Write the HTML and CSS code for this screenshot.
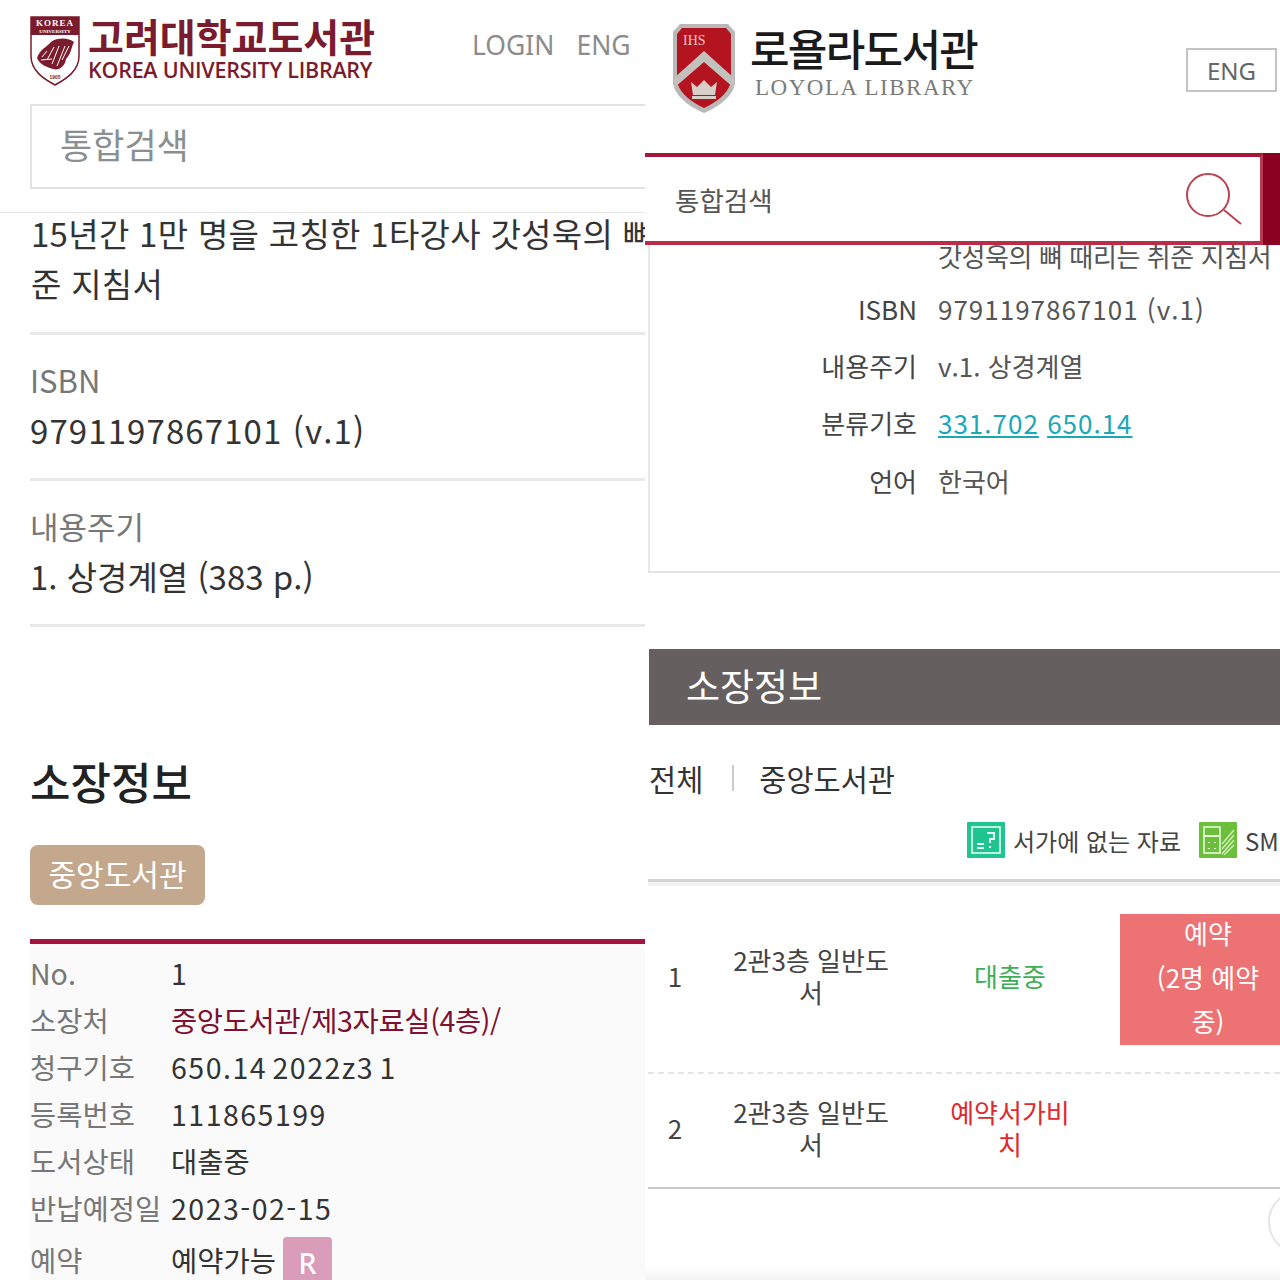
FILE: index.html
```html
<!DOCTYPE html>
<html lang="ko">
<head>
  <meta charset="UTF-8">
  <meta name="viewport" content="width=device-width, initial-scale=1.0">
  <title>소장정보</title>
  <link rel="stylesheet" href="styles.css">
</head>
<body>
  <div class="page">
    <!-- 고려대학교 -->
    <section class="korea">
      <div class="korea-head">
        <svg class="korea-shield" viewBox="0 0 50 70">
          <path d="M1 1H49V40C49 55 36 63 25 69C14 63 1 55 1 40Z" fill="#fff" stroke="#7a1c2e" stroke-width="1.5"/>
          <rect x="1" y="1" width="48" height="18" fill="#7a1c2e"/>
          <text x="25" y="10" class="shield-top">KOREA</text>
          <text x="25" y="17" class="shield-sub">UNIVERSITY</text>
          <path d="M7 42C10 33 17 31 21 26C28 21 39 22 44 26C41 32 41 38 36 43C35 50 29 55 23 53C17 51 10 49 7 42Z" fill="#7a1c2e"/>
          <path d="M12 41L17 35M17 44L24 31M22 48L29 30M27 50L35 30M32 44L39 30M11 44L22 43" stroke="#fff" stroke-width="1" fill="none"/>
          <text x="25" y="63" class="shield-year">1905</text>
        </svg>
        <div class="korea-name">
          <div class="korea-ko">고려대학교도서관</div>
          <div class="korea-en">KOREA UNIVERSITY LIBRARY</div>
        </div>
        <nav class="korea-nav"><span>LOGIN</span><span>ENG</span></nav>
      </div>
      <div class="korea-search">통합검색</div>
      <div class="korea-divider"></div>

      <div class="korea-title">15년간 1만 명을 코칭한 1타강사 갓성욱의 뼈 때리는 취<br>준 지침서</div>
      <div class="korea-field">
        <div class="field-label">ISBN</div>
        <div class="field-value num-wide">9791197867101 (v.1)</div>
      </div>
      <div class="korea-field last">
        <div class="field-label">내용주기</div>
        <div class="field-value">1. 상경계열 (383 p.)</div>
      </div>

      <h2 class="korea-holding">소장정보</h2>
      <div class="korea-tab">중앙도서관</div>

      <dl class="holding-list">
        <dt>No.</dt><dd>1</dd>
        <dt>소장처</dt><dd class="place">중앙도서관/제3자료실(4층)/</dd>
        <dt>청구기호</dt><dd class="num">650.14 2022z3 1</dd>
        <dt>등록번호</dt><dd class="num">111865199</dd>
        <dt>도서상태</dt><dd>대출중</dd>
        <dt>반납예정일</dt><dd class="num">2023-02-15</dd>
        <dt class="reserve-label">예약</dt><dd class="reserve">예약가능 <span class="badge-r">R</span></dd>
      </dl>
    </section>

    <!-- 서강대학교 로욜라 -->
    <section class="loyola">
      <div class="loyola-head">
        <svg class="loyola-shield" viewBox="0 0 64 92">
          <path d="M8 2H56L63 10V62C60 76 44 86 32 91C20 86 4 76 1 62V10Z" fill="#b9b9b9"/>
          <path d="M10 6H54L59 12V60C56 72 43 81 32 86C21 81 8 72 5 60V12Z" fill="#b3141f"/>
          <path d="M2 56L32 29L62 56V66L32 40L2 66Z" fill="#c4c0bd"/>
          <text x="11" y="23" class="ihs">IHS</text>
          <path d="M19 60L25 65L32 58L39 65L45 60L43 73H21Z" fill="#d9cfc9"/>
          <rect x="20" y="74" width="24" height="3" fill="#d9cfc9"/>
        </svg>
        <div class="loyola-name">
          <div class="loyola-ko">로욜라도서관</div>
          <div class="loyola-en">LOYOLA LIBRARY</div>
        </div>
        <div class="loyola-eng">ENG</div>
      </div>

      <div class="loyola-search">
        <div class="loyola-input">
          <span>통합검색</span>
          <svg class="search-icon" viewBox="0 0 60 54">
            <circle cx="24" cy="23" r="21" fill="none" stroke="#b8444f" stroke-width="2"/>
            <path d="M40 38L57 52" stroke="#b8444f" stroke-width="2" fill="none"/>
          </svg>
        </div>
        <div class="loyola-btn"></div>
      </div>

      <div class="detail-card">
        <div class="detail-cut">갓성욱의 뼈 때리는 취준 지침서</div>
        <div class="detail-row"><span class="detail-label">ISBN</span><span class="detail-num">9791197867101 (v.1)</span></div>
        <div class="detail-row"><span class="detail-label">내용주기</span><span>v.1. 상경계열</span></div>
        <div class="detail-row"><span class="detail-label">분류기호</span><span class="detail-num"><a class="link">331.702</a> <a class="link">650.14</a></span></div>
        <div class="detail-row"><span class="detail-label">언어</span><span>한국어</span></div>
      </div>

      <div class="section-bar">소장정보</div>

      <div class="tabs">
        <span>전체</span><i class="tab-sep"></i><span>중앙도서관</span>
      </div>

      <div class="legend">
        <span class="legend-item">
          <svg class="legend-icon" viewBox="0 0 38 36">
            <rect width="38" height="36" rx="1" fill="#1fc48f"/>
            <rect x="5" y="5" width="28" height="26" fill="none" stroke="#e6fff5" stroke-width="1.6"/>
            <path d="M20 11H27V17H23V21M23 24V26M10 22H17M10 26H17" fill="none" stroke="#e6fff5" stroke-width="2"/>
          </svg>
          서가에 없는 자료
        </span>
        <span class="legend-item">
          <svg class="legend-icon" viewBox="0 0 38 36">
            <rect width="38" height="36" rx="1" fill="#6cbf3a"/>
            <rect x="5" y="5" width="16" height="26" fill="none" stroke="#e9f8dc" stroke-width="1.6"/>
            <path d="M5 14H21M10 20V21M16 20V21M10 26V27M16 26V27" stroke="#e9f8dc" stroke-width="2" fill="none"/>
            <path d="M23 22L35 8M23 27L35 13M23 32L35 18M25 33L35 23" stroke="#cfeeb6" stroke-width="1.5" fill="none"/>
          </svg>
          SMS
        </span>
      </div>

      <div class="holding-table">
        <div class="holding-row first">
          <div class="cell-no">1</div>
          <div class="cell-place">2관3층 일반도서</div>
          <div class="cell-state loan">대출중</div>
          <div class="cell-action"><div class="reserve-btn"><div>예약<br>(2명 예약<br>중)</div></div></div>
        </div>
        <div class="holding-row second">
          <div class="cell-no">2</div>
          <div class="cell-place">2관3층 일반도서</div>
          <div class="cell-state shelf">예약서가비치</div>
          <div class="cell-action"></div>
        </div>
      </div>
      <div class="float-circle"></div>
      <div class="bottom-fade"></div>
    </section>
  </div>
</body>
</html>
```

FILE: styles.css
```css
/* 전체 */
* {
  box-sizing: border-box;
  margin: 0;
  padding: 0;
}

body {
  background-color: #fff;
  font-family: 'Noto Sans CJK KR', 'Noto Sans', sans-serif;
  color: #333;
}

.page {
  display: grid;
  grid-template-columns: 645px 635px;
  width: 1280px;
  height: 1280px;
  overflow: hidden;
}

.korea,
.loyola {
  position: relative;
  height: 1280px;
  overflow: hidden;
}

/* 왼쪽 머리글 */
.korea {
  background-color: #fff;
}

.korea-head {
  display: flex;
  align-items: flex-start;
  height: 104px;
  padding: 16px 0 0 30px;
}

.korea-shield {
  width: 50px;
  height: 70px;
  flex: none;
}

.shield-top {
  font: 700 9px 'Liberation Serif', serif;
  fill: #fff;
  text-anchor: middle;
  letter-spacing: 1px;
}

.shield-sub {
  font: 700 5px 'Liberation Serif', serif;
  fill: #fff;
  text-anchor: middle;
}

.shield-year {
  font: 700 5px 'Liberation Sans', sans-serif;
  fill: #7a1c2e;
  text-anchor: middle;
}

.korea-name {
  margin-left: 8px;
  width: 295px;
}

.korea-ko {
  margin-top: -1px;
  font-size: 39px;
  font-weight: 700;
  line-height: 40px;
  color: #7a1c2e;
  white-space: nowrap;
}

.korea-en {
  margin-top: 1px;
  font-family: 'Open Sans', 'Noto Sans', sans-serif;
  font-size: 21.5px;
  font-weight: 600;
  line-height: 28px;
  color: #7a1c2e;
  white-space: nowrap;
  letter-spacing: -0.25px;
}

.korea-nav {
  display: flex;
  gap: 22px;
  margin: 12px 0 0 89px;
  font-family: 'Noto Sans', sans-serif;
  font-size: 26.5px;
  line-height: 34px;
  color: #8c8c8c;
}

.korea-search {
  width: 630px;
  margin-left: 30px;
  height: 85px;
  padding-left: 28px;
  border: 2px solid #dfe3e6;
  border-right: none;
  font-size: 35px;
  line-height: 76px;
  color: #8a8f92;
}

.korea-divider {
  height: 1px;
  margin-top: 23px;
  background-color: #e4e4e4;
}

.korea-title {
  width: 680px;
  margin: -5px 0 0 31px;
  padding-bottom: 24px;
  font-size: 33px;
  line-height: 50px;
  color: #333;
  white-space: nowrap;
  letter-spacing: 0.3px;
}

.korea-field {
  margin-left: 30px;
  padding: 20px 0 23px;
  border-top: 3px solid #e8e8e8;
}

.korea-field.last {
  border-bottom: 3px solid #e8e8e8;
}

.field-label {
  font-size: 31px;
  line-height: 50px;
  color: #777;
}

.field-value {
  font-size: 33px;
  line-height: 50px;
  color: #333;
}

.num-wide {
  letter-spacing: 1.1px;
}

.korea-holding {
  margin: 122px 0 0 30px;
  font-size: 44px;
  font-weight: 500;
  line-height: 64px;
  color: #222;
}

.korea-tab {
  display: inline-block;
  margin: 32px 0 0 30px;
  width: 175px;
  height: 60px;
  border-radius: 8px;
  background-color: #c4a88e;
  color: #fff;
  font-size: 30px;
  line-height: 56px;
  text-align: center;
}

.holding-list {
  display: grid;
  grid-template-columns: 141px 1fr;
  grid-auto-rows: 47px;
  margin: 34px 0 0 30px;
  padding: 6px 0 40px;
  border-top: 5px solid #a6133f;
  background-color: #fafafa;
  font-size: 28.5px;
  line-height: 46px;
}

.holding-list dt {
  color: #777;
  white-space: nowrap;
}

.holding-list dd {
  color: #333;
}

.holding-list .place {
  color: #7d1230;
  letter-spacing: -0.35px;
}

.holding-list .num {
  letter-spacing: 1.5px;
  word-spacing: -4px;
}

.holding-list .reserve-label {
  padding-top: 5px;
}

.holding-list .reserve {
  display: flex;
  align-items: flex-start;
  gap: 7px;
  padding-top: 5px;
}

.badge-r {
  width: 49px;
  height: 50px;
  border-radius: 4px;
  background-color: #d99cb9;
  color: #fff;
  font-family: 'Noto Sans', sans-serif;
  font-weight: 500;
  text-align: center;
  line-height: 52px;
}

/* 오른쪽 머리글 */
.loyola-head {
  display: flex;
  align-items: flex-start;
  height: 153px;
  padding: 22px 0 0 27px;
}

.loyola-shield {
  width: 64px;
  height: 92px;
  flex: none;
}

.ihs {
  font: 400 14px 'Liberation Serif', serif;
  fill: #e8c9c9;
}

.loyola-name {
  margin-left: 14px;
  width: 436px;
}

.loyola-ko {
  font-size: 43px;
  font-weight: 500;
  line-height: 52px;
  margin-top: -1px;
  color: #1a1a1a;
  white-space: nowrap;
  letter-spacing: -1.7px;
}

.loyola-en {
  margin-left: 5px;
  font-family: 'Liberation Serif', serif;
  font-size: 23px;
  line-height: 30px;
  color: #7b7b7b;
  letter-spacing: 1.5px;
  white-space: nowrap;
}

.loyola-eng {
  width: 91px;
  height: 44px;
  margin-top: 26px;
  flex: none;
  border: 2px solid #c4c4c4;
  font-family: 'Noto Sans', sans-serif;
  font-size: 24px;
  line-height: 42px;
  text-align: center;
  color: #666;
}

.loyola-search {
  display: flex;
  height: 92px;
}

.loyola-input {
  display: flex;
  align-items: center;
  justify-content: space-between;
  width: 618px;
  padding: 0 16px 0 30px;
  border-top: 4px solid #a6173a;
  border-bottom: 4px solid #bb2c48;
  border-right: 3px solid #b83a52;
  font-size: 26.5px;
  color: #555;
}

.search-icon {
  width: 60px;
  height: 54px;
}

.loyola-btn {
  flex: 1;
  background-color: #8a0020;
}

/* 상세 정보 */
.detail-card {
  height: 329px;
  margin: -1px 0 0 3px;
  border-left: 2px solid #e8e8e8;
  border-bottom: 2px solid #e4e4e4;
  font-size: 26px;
  color: #555;
}

.detail-cut {
  height: 36px;
  padding-left: 288px;
  line-height: 24px;
  white-space: nowrap;
  letter-spacing: -0.4px;
}

.detail-row {
  display: flex;
  gap: 21px;
  height: 57.2px;
  align-items: center;
}

.detail-label {
  width: 267px;
  text-align: right;
  color: #444;
  flex: none;
}

.detail-num {
  letter-spacing: 1px;
}

.link {
  color: #1aa7b8;
  text-decoration: underline;
}

.section-bar {
  height: 76px;
  margin: 76px 0 0 4px;
  padding-left: 37px;
  background-color: #655f5f;
  color: #fff;
  font-size: 37px;
  line-height: 72px;
}

.tabs {
  display: flex;
  align-items: center;
  height: 56px;
  margin: 25px 0 0 4px;
  font-size: 29.5px;
  color: #333;
}

.tab-sep {
  width: 2px;
  height: 26px;
  margin: 0 25px 0 29px;
  background-color: #ccc;
}

/* 범례 */
.legend {
  display: flex;
  gap: 18px;
  height: 40px;
  margin: 14px 0 0 322px;
  white-space: nowrap;
}

.legend-item {
  display: flex;
  align-items: center;
  gap: 8px;
  flex: none;
  font-size: 24px;
  color: #444;
}

.legend-icon {
  width: 38px;
  height: 36px;
  flex: none;
}

/* 소장 표 */
.holding-table {
  margin: 19px 0 0 3px;
  padding-top: 4px;
  border-top: 3px solid #d4d4d4;
  background-color: #f3f3f3;
  font-size: 26px;
  line-height: 32px;
  text-align: center;
}

.holding-row {
  display: grid;
  grid-template-columns: 54px 218px 180px 1fr;
  align-items: center;
  background-color: #fff;
  color: #444;
}

.holding-row.first {
  height: 188px;
  padding-bottom: 7px;
  border-bottom: 2px dashed #e4e4e4;
}

.holding-row.second {
  height: 115px;
  padding-bottom: 6px;
  border-bottom: 2px solid #c9c9c9;
}

.cell-place {
  padding: 0 25px;
  word-break: break-all;
}

.cell-state {
  padding: 0 25px;
  word-break: break-all;
}

.loan {
  color: #3fae55;
}

.shelf {
  color: #e0282e;
}

.reserve-btn {
  display: flex;
  align-items: center;
  justify-content: center;
  width: 176px;
  height: 131px;
  margin: 8px 0 0 20px;
  padding-bottom: 6px;
  background-color: #ec7273;
  color: #fff;
  line-height: 44px;
}

.float-circle {
  position: absolute;
  left: 623px;
  top: 1190px;
  width: 64px;
  height: 64px;
  border: 2px solid #e6e6e6;
  border-radius: 50%;
  background-color: #fff;
}

.bottom-fade {
  position: absolute;
  left: 0;
  right: 0;
  bottom: 0;
  height: 14px;
  background-image: linear-gradient(#fff, #f3f3f3);
}
```
